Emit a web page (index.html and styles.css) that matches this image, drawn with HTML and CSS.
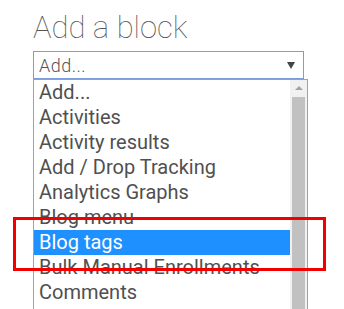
FILE: index.html
```html
<!DOCTYPE html>
<html>
<head>
<meta charset="utf-8">
<link rel="stylesheet" href="styles.css">
</head>
<body>
<div class="page">
  <h1 class="title">Add a block</h1>
  <div class="select">
    <span class="select-value">Add...</span>
    <span class="select-arrow"></span>
  </div>
  <div class="dropdown">
    <ul class="options">
      <li class="option">Add...</li>
      <li class="option">Activities</li>
      <li class="option">Activity results</li>
      <li class="option">Add / Drop Tracking</li>
      <li class="option">Analytics Graphs</li>
      <li class="option">Blog menu</li>
      <li class="option selected">Blog tags</li>
      <li class="option">Bulk Manual Enrollments</li>
      <li class="option">Comments</li>
    </ul>
    <div class="scrollbar">
      <div class="scroll-up"><span class="scroll-up-arrow"></span></div>
      <div class="scroll-thumb"></div>
    </div>
  </div>
</div>
<div class="highlight-box"></div>
</body>
</html>
```
FILE: styles.css
```css
html, body {
  margin: 0;
  padding: 0;
  background: #ffffff;
  overflow: hidden;
}
body {
  width: 344px;
  height: 309px;
  position: relative;
}
.page {
  padding: 8px 0 0 33px;
}
.title {
  margin: 0;
  font-family: Roboto, "Open Sans", sans-serif;
  font-weight: 100;
  font-size: 31px;
  line-height: 40px;
  color: #555555;
}
.select {
  margin-top: 3px;
  width: 271px;
  height: 28px;
  box-sizing: border-box;
  border: 1px solid #7b9ddb;
  display: flex;
  align-items: center;
  justify-content: space-between;
  padding: 0 8px 0 5px;
}
.select-value {
  font-family: Roboto, "Open Sans", sans-serif;
  font-weight: 300;
  font-size: 18px;
  letter-spacing: 0.5px;
  color: #555555;
  padding-top: 1px;
}
.select-arrow {
  width: 0;
  height: 0;
  border-left: 4px solid transparent;
  border-right: 4px solid transparent;
  border-top: 7px solid #444444;
  margin-top: 1px;
}
.dropdown {
  width: 275px;
  height: 240px;
  box-sizing: border-box;
  border: 1px solid #8aa4cf;
  border-bottom: none;
  display: flex;
  overflow: hidden;
}
.options {
  list-style: none;
  margin: 0;
  padding: 0;
  flex: 1;
}
.option {
  height: 25px;
  line-height: 24px;
  padding-left: 5px;
  font-family: Roboto, "Liberation Sans", sans-serif;
  font-size: 20px;
  color: #505050;
  white-space: nowrap;
}
.option.selected {
  background: #1e90ff;
  color: #ffffff;
}
.scrollbar {
  width: 17px;
  background: #f1f1f1;
  display: flex;
  flex-direction: column;
  align-items: center;
}
.scroll-up {
  height: 17px;
  width: 17px;
  display: flex;
  align-items: center;
  justify-content: center;
}
.scroll-up-arrow {
  width: 0;
  height: 0;
  border-left: 4px solid transparent;
  border-right: 4px solid transparent;
  border-bottom: 4px solid #a3a3a3;
  margin-bottom: 1px;
}
.scroll-thumb {
  width: 13px;
  flex: 1;
  background: #c1c1c1;
}
.highlight-box {
  position: absolute;
  left: 13px;
  top: 217px;
  width: 313px;
  height: 54px;
  box-sizing: border-box;
  border: 3px solid #f20000;
}
```
